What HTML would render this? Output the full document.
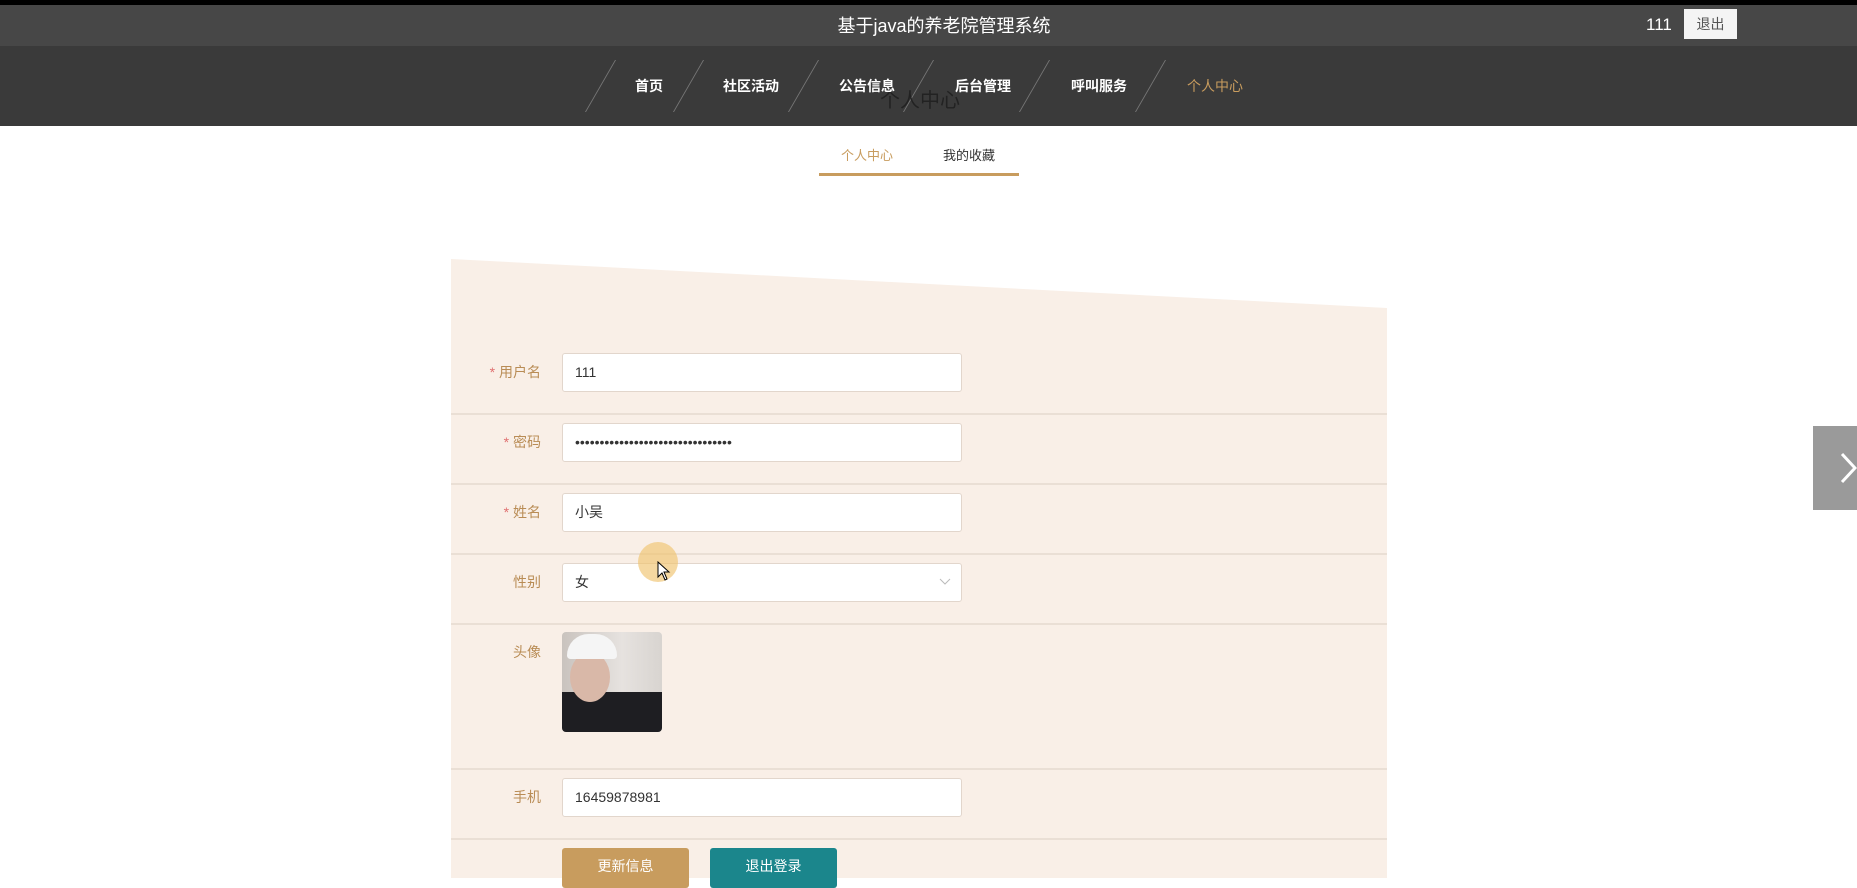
<!DOCTYPE html>
<html><head><meta charset="utf-8"><style>
*{margin:0;padding:0;box-sizing:border-box}
body{width:1857px;height:878px;overflow:hidden;background:#fff;font-family:"Liberation Sans","Noto Sans CJK SC",sans-serif;position:relative}
.a{position:absolute}
.lbl{position:absolute;right:0;width:100px;text-align:right;font-size:14px;color:#b98c55}
.lbl b{color:#e07070;font-weight:normal}
.inp{position:absolute;left:562px;width:400px;height:39px;background:#fff;border:1px solid #e2d6cc;border-radius:3px;font-size:14px;color:#333;padding-left:12px;line-height:37px}
.sep{position:absolute;left:451px;width:936px;height:2px;background:#eadfd5}
.nav{position:absolute;top:76px;font-size:14px;color:#fff;transform:translateX(-50%);font-weight:bold}
.dl{position:absolute;top:60px;width:1px;height:52px;background:#777;transform:skewX(-30deg)}
</style></head><body>
<div class="a" style="left:0;top:0;width:1857px;height:5px;background:#000"></div>
<div class="a" style="left:0;top:5px;width:1857px;height:41px;background:#474747"></div>
<div class="a" style="left:0;top:12px;width:1888px;text-align:center;font-size:18px;color:#fff">基于java的养老院管理系统</div>
<div class="a" style="left:1646px;top:15px;font-size:17px;color:#fff">111</div>
<div class="a" style="left:1684px;top:9px;width:53px;height:30px;background:#f4f4f4;color:#555;font-size:14px;text-align:center;line-height:30px">退出</div>
<div class="a" style="left:0;top:46px;width:1857px;height:80px;background:#3a3a3a"></div>
<div class="dl" style="left:600px"></div><div class="dl" style="left:688px"></div><div class="dl" style="left:803px"></div><div class="dl" style="left:918px"></div><div class="dl" style="left:1034px"></div><div class="dl" style="left:1150px"></div>
<div class="a" style="left:880px;top:84px;font-size:20px;color:#222">个人中心</div>
<div class="nav" style="left:649px">首页</div>
<div class="nav" style="left:751px">社区活动</div>
<div class="nav" style="left:867px">公告信息</div>
<div class="nav" style="left:983px">后台管理</div>
<div class="nav" style="left:1099px">呼叫服务</div>
<div class="nav" style="left:1215px;color:#c89c5e;font-weight:normal">个人中心</div>
<div class="a" style="left:841px;top:145px;font-size:13px;color:#c89c5e">个人中心</div>
<div class="a" style="left:943px;top:145px;font-size:13px;color:#333">我的收藏</div>
<div class="a" style="left:819px;top:173px;width:200px;height:3px;background:#c89c5e"></div>
<svg class="a" style="left:451px;top:259px" width="936" height="619"><polygon points="0,0 936,49 936,619 0,619" fill="#f9efe7"/></svg>
<div class="a" style="left:451px;top:353px;width:90px;height:38px;line-height:38px"><div class="lbl"><b>* </b>用户名</div></div>
<div class="inp" style="top:353px">111</div>
<div class="sep" style="top:413px"></div>
<div class="a" style="left:451px;top:423px;width:90px;height:38px;line-height:38px"><div class="lbl"><b>* </b>密码</div></div>
<div class="inp" style="top:423px;letter-spacing:0px">••••••••••••••••••••••••••••••••</div>
<div class="sep" style="top:483px"></div>
<div class="a" style="left:451px;top:493px;width:90px;height:38px;line-height:38px"><div class="lbl"><b>* </b>姓名</div></div>
<div class="inp" style="top:493px">小吴</div>
<div class="sep" style="top:553px"></div>
<div class="a" style="left:451px;top:563px;width:90px;height:38px;line-height:38px"><div class="lbl">性别</div></div>
<div class="inp" style="top:563px">女<svg class="a" style="right:10px;top:14px" width="12" height="8"><path d="M1 1 L6 6 L11 1" stroke="#bbb" fill="none"/></svg></div>
<div class="sep" style="top:623px"></div>
<div class="a" style="left:451px;top:642px;width:90px;height:20px"><div class="lbl">头像</div></div>
<div class="a" style="left:562px;top:632px;width:100px;height:100px;border-radius:4px;overflow:hidden;background:linear-gradient(90deg,#c9c3be 0%,#e6e2df 60%,#d8d4d0 100%)">
<div class="a" style="left:0;top:60px;width:100px;height:40px;background:#1e1e22"></div>
<div class="a" style="left:8px;top:20px;width:40px;height:50px;border-radius:50%;background:#d9b8a8"></div>
<div class="a" style="left:5px;top:2px;width:50px;height:25px;border-radius:25px 25px 4px 4px;background:#f5f5f5"></div>
</div>
<div class="sep" style="top:768px"></div>
<div class="a" style="left:451px;top:778px;width:90px;height:38px;line-height:38px"><div class="lbl">手机</div></div>
<div class="inp" style="top:778px">16459878981</div>
<div class="sep" style="top:838px"></div>
<div class="a" style="left:562px;top:848px;width:127px;height:40px;background:#c89c5e;border-radius:3px;color:#fff;font-size:14px;text-align:center;line-height:36px">更新信息</div>
<div class="a" style="left:710px;top:848px;width:127px;height:40px;background:#1b868c;border-radius:3px;color:#fff;font-size:14px;text-align:center;line-height:36px">退出登录</div>
<div class="a" style="left:638px;top:542px;width:40px;height:40px;border-radius:50%;background:rgba(240,195,110,.65)"></div>
<svg class="a" style="left:657px;top:561px" width="14" height="20"><path d="M1 1 L1 16 L5 12 L8 19 L10 18 L7 11 L12 11 Z" fill="#fff" stroke="#000"/></svg>
<div class="a" style="left:1813px;top:426px;width:44px;height:84px;background:#9a9a9a"></div>
<svg class="a" style="left:1840px;top:452px" width="17" height="32"><path d="M2 2 L15 16 L2 30" stroke="#fff" stroke-width="3" fill="none"/></svg>
</body></html>
